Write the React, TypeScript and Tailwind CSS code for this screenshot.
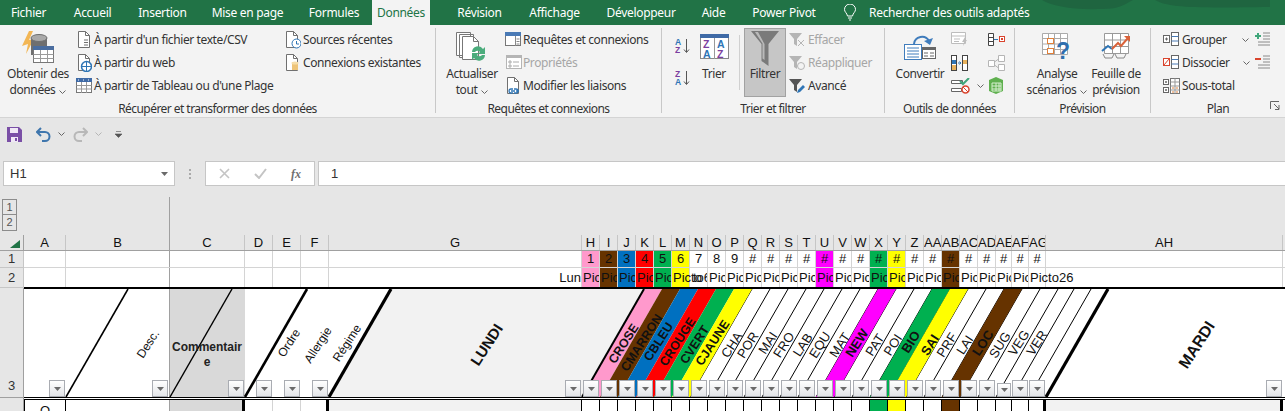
import type { ReactNode } from "react"

const uiFont = "font-['Noto_Sans',sans-serif]"
const cellFont = "font-['Liberation_Sans',Arial,sans-serif]"

const tabs = [
  { label: "Fichier", width: "w-[61px] -ml-[2px]" },
  { label: "Accueil", width: "w-[67px]" },
  { label: "Insertion", width: "w-[73px]" },
  { label: "Mise en page", width: "w-[97px]" },
  { label: "Formules", width: "w-[76px]" },
  { label: "Données", width: "w-[58px] bg-[#f3f3f3] text-[#217346] mr-[14px]" },
  { label: "Révision", width: "w-[71px]" },
  { label: "Affichage", width: "w-[79px]" },
  { label: "Développeur", width: "w-[94px]" },
  { label: "Aide", width: "w-[51px]" },
  { label: "Power Pivot", width: "w-[90px]" },
]

const Chevron = ({ grey }: { grey?: boolean }) => (
  <svg width="7" height="4" viewBox="0 0 7 4" className="inline-block shrink-0">
    <path d="M.5.5l3 3 3-3" fill="none" stroke={grey ? "#b5b5b5" : "#666"} />
  </svg>
)

const Doc = ({ children, w = 16, h = 18, stroke = "#707070" }: { children?: ReactNode; w?: number; h?: number; stroke?: string }) => (
  <svg width={w} height={h} viewBox={`0 0 ${w} ${h}`} className="shrink-0">
    <path d="M1.5.5h7l4 4v12h-11z" fill="#fff" stroke={stroke} />
    <path d="M8.5.5v4h4" fill="none" stroke={stroke} />
    {children}
  </svg>
)

const GetDataIcon = () => (
  <svg width="34" height="33" viewBox="0 0 34 33">
    <path d="M8 0L1 15l6-2-2 10 8-15-5 1 4-9z" fill="#f2b654" />
    <path d="M10 7v17h16V7z" fill="#6f6f6f" />
    <ellipse cx="18" cy="7" rx="8" ry="3.5" fill="#a9a9a9" stroke="#6f6f6f" />
    <rect x="12.5" y="15.5" width="20" height="16" fill="#fff" stroke="#777" />
    <rect x="12" y="15" width="21" height="4" fill="#4a6d9f" />
    <path d="M12.5 23.5h20M12.5 27.5h20M19.5 19v12M26.5 19v12" stroke="#9a9a9a" />
  </svg>
)

const TableIcon = () => (
  <svg width="17" height="16" viewBox="0 0 17 16" className="shrink-0">
    <rect x=".5" y=".5" width="15" height="14" fill="#fff" stroke="#777" />
    <rect x="0" y="0" width="16" height="4" fill="#3f6aa6" />
    <path d="M.5 7.5h15M.5 11h15M5.5 4v11M10.5 4v11" stroke="#9a9a9a" />
    <path d="M2 2h1M7 2h1M12 2h1" stroke="#fff" />
  </svg>
)

const RefreshIcon = () => (
  <svg width="34" height="32" viewBox="0 0 34 32">
    <path d="M1.5 1.5h14v23h-14zM4.5 3.5h14v23h-14z" fill="#fff" stroke="#777" />
    <path d="M7.5 5.5h11l5 5v18h-16z" fill="#fff" stroke="#777" />
    <path d="M18.5 5.5v5h5" fill="none" stroke="#777" />
    <path d="M17 21a6 6 0 0 1 11-3l2-2v7h-7l2-2a3 3 0 0 0-5 0z" fill="#4bac7c" />
    <path d="M30 24a6 6 0 0 1-11 3l-2 2v-7h7l-2 2a3 3 0 0 0 5 0z" fill="#4bac7c" />
  </svg>
)

const PanelIcon = () => (
  <svg width="17" height="15" viewBox="0 0 17 15" className="shrink-0">
    <rect x=".5" y=".5" width="15" height="13" fill="#fff" stroke="#777" />
    <rect x="0" y="0" width="16" height="4" fill="#4a7ab5" />
    <path d="M10.5 4v10M11.5 7h3M11.5 9.5h3M11.5 12h3" stroke="#888" />
  </svg>
)

const SortIcon = ({ top, bottom, topColor, bottomColor }: { top: string; bottom: string; topColor: string; bottomColor: string }) => (
  <svg width="16" height="16" viewBox="0 0 16 16">
    <text x="0" y="7" fontSize="8.5" fontWeight="700" fontFamily="Liberation Sans" fill={topColor}>{top}</text>
    <text x="0" y="15" fontSize="8.5" fontWeight="700" fontFamily="Liberation Sans" fill={bottomColor}>{bottom}</text>
    <path d="M11.5 1v13M9 11.5l2.5 3 2.5-3" fill="none" stroke="#555" />
  </svg>
)

const SortBigIcon = () => (
  <svg width="29" height="26" viewBox="0 0 29 26">
    <rect x=".5" y=".5" width="28" height="24" fill="#fff" stroke="#888" />
    <rect x="0" y="0" width="29" height="4" fill="#3f6aa6" />
    <path d="M14.5 4v21" stroke="#999" />
    <g fontSize="10.5" fontWeight="700" fontFamily="Liberation Sans">
      <text x="3" y="14" fill="#7b3fa0">Z</text>
      <text x="3" y="24" fill="#2f75b5">A</text>
      <text x="17" y="14" fill="#2f75b5">A</text>
      <text x="17" y="24" fill="#7b3fa0">Z</text>
    </g>
  </svg>
)

const FunnelBig = () => (
  <svg width="30" height="36" viewBox="0 0 30 36">
    <path d="M1 1h28L18.5 14v22l-7-5V14z" fill="#7a7a7a" />
    <path d="M5 2h3l6.5 12v16l-2-1.5V13.500z" fill="#b9b9b9" />
  </svg>
)

const SmallFunnel = ({ color, children }: { color: string; children?: ReactNode }) => (
  <svg width="18" height="16" viewBox="0 0 18 16" className="shrink-0">
    <path d="M0 1h13L8 7v7L5 12V7z" fill={color} />
    {children}
  </svg>
)

const ConvertIcon = () => (
  <svg width="32" height="26" viewBox="0 0 32 26">
    <path d="M10 10a8 8 0 0 1 15-3" fill="none" stroke="#3f7cbc" strokeWidth="2" />
    <path d="M20 7l6 4 3-7z" fill="#3f7cbc" />
    <rect x=".5" y="10.500" width="17" height="15" fill="#fff" stroke="#3f7cbc" />
    <path d="M3 14h12M3 17h12M3 20h12M3 23h12" stroke="#3f7cbc" />
    <rect x="18.500" y="13.500" width="13" height="11" fill="#fff" stroke="#666" />
    <rect x="18" y="13" width="14" height="3" fill="#666" />
    <path d="M20 19h4M26 19h4M20 22h4M26 22h4" stroke="#666" />
  </svg>
)

const AnalyseIcon = () => (
  <svg width="30" height="28" viewBox="0 0 30 28">
    <path d="M.5.500h25v21h-25zM.5 5.500h25M.5 11h25M.5 16.500h25M6.500.500v21M12.500.500v21M18.500.500v21" fill="#fff" stroke="#aaa" />
    <rect x="5.500" y="5.500" width="6" height="5" fill="#fff" stroke="#e0803a" />
    <rect x="5.500" y="15.500" width="6" height="5" fill="#fff" stroke="#e0803a" />
    <text x="14" y="26" fontSize="23" fontWeight="700" fontFamily="Liberation Sans" fill="#2f6fae">?</text>
  </svg>
)

const ForecastIcon = () => (
  <svg width="30" height="28" viewBox="0 0 30 28">
    <path d="M3.500.500h24v20h-24zM3.500 7h24M3.500 13.500h24M11.500.500v20M19.500.500v20" fill="#fff" stroke="#999" />
    <path d="M1 18l6-5 4 3" fill="none" stroke="#2f75b5" strokeWidth="2" />
    <path d="M11 16l6-6 3 3 7-8" fill="none" stroke="#d9623a" strokeWidth="2" />
    <path d="M23 3h6v6z" fill="#d9623a" />
    <path d="M2 21l2 4h7l2-4M14 21l2 4h7l2-4" fill="none" stroke="#888" />
  </svg>
)

const GroupIcon = ({ box }: { box: "plus" | "slash" }) => (
  <svg width="17" height="15" viewBox="0 0 17 15" className="shrink-0">
    {box === "slash" ? (
      <>
        <rect x=".5" y="3.500" width="6" height="7" fill="#fff" stroke="#d9442d" />
        <path d="M1 10l5-6" stroke="#d9442d" />
      </>
    ) : (
      <>
        <rect x=".5" y="3.500" width="6" height="7" fill="#fff" stroke="#666" />
        <path d="M2 7h3M3.500 5.500v3" stroke="#666" />
      </>
    )}
    <rect x="8.500" y=".5" width="7" height="13" fill="#fff" stroke="#666" />
    <path d="M8.500 4.500h7M8.500 9h7" stroke="#4a7ab5" />
  </svg>
)

const SubTotalIcon = () => (
  <svg width="17" height="16" viewBox="0 0 17 16" className="shrink-0">
    <rect x=".5" y="1.500" width="5" height="5" fill="#fff" stroke="#666" />
    <rect x=".5" y="9.500" width="5" height="5" fill="#fff" stroke="#666" />
    <path d="M2 4h2M3 3v2M2 12h2M3 11v2" stroke="#666" />
    <rect x="7.500" y=".5" width="9" height="15" fill="#fff" stroke="#777" />
    <path d="M7.500 4h9M7.500 8h9M7.500 12h9M12 .5v15" stroke="#999" />
    <path d="M9 10h2M13 10h2M9 14h2M13 14h2" stroke="#e0803a" />
  </svg>
)

const OutlineRight = ({ sign }: { sign: "plus" | "minus" }) => (
  <svg width="15" height="15" viewBox="0 0 15 15" className="shrink-0">
    {sign === "plus" ? <path d="M0 4h6M3 1v6" stroke="#3fa67a" strokeWidth="2" /> : <path d="M0 4h6" stroke="#d9442d" strokeWidth="2" />}
    <path d="M8 1h7M8 4h7M8 7h7M3 10h12M3 13h12" stroke="#8a8a8a" />
  </svg>
)

const SmallItem = ({ icon, label, box, disabled }: { icon: ReactNode; label: string; box: string; disabled?: boolean }) => (
  <div className={`flex h-[23px] items-center whitespace-nowrap ${disabled ? "text-[#a6a6a6]" : ""}`}>
    <div className={`flex shrink-0 items-center justify-center ${box}`}>{icon}</div>
    {label}
  </div>
)

const BigButton = ({ icon, lines, chevron, className }: { icon: ReactNode; lines: string[]; chevron?: boolean; className: string }) => (
  <div className={`flex shrink-0 flex-col items-center text-center leading-4 ${className}`}>
    <div className="flex h-[38px] items-center justify-center">{icon}</div>
    {lines.map((line, index) => (
      <div key={line} className="whitespace-nowrap">
        {line}
        {chevron && index === lines.length - 1 && (
          <span className="ml-1 inline-block align-middle">
            <Chevron />
          </span>
        )}
      </div>
    ))}
  </div>
)

const Group = ({ label, className, children }: { label: string; className: string; children: ReactNode }) => (
  <div className={`relative flex h-[85px] shrink-0 flex-col border-r border-[#c8c8c8] ${className}`}>
    <div className="flex h-[74px]">{children}</div>
    <div className="h-[11px] text-center leading-[14px] tracking-[-0.55px]">{label}</div>
  </div>
)

function Ribbon() {
  return (
    <div className={`flex h-[93px] border-b border-[#d4d4d4] bg-[#f3f3f3] pt-[3px] text-[12px] tracking-[-0.4px] text-[#333] ${uiFont}`}>
      <Group label="Récupérer et transformer des données" className="w-[436px]">
        <BigButton className="ml-[5px] w-[66px]" icon={<GetDataIcon />} lines={["Obtenir des", "données"]} chevron />
        <div className="ml-1 w-[208px]">
          <SmallItem box="w-[19px]" label="À partir d'un fichier texte/CSV" icon={<Doc w={15}><path d="M7 9h4M7 11.500h4M7 14h4" stroke="#707070" /></Doc>} />
          <SmallItem box="w-[19px]" label="À partir du web" icon={<Doc w={15}><circle cx="9.500" cy="12.500" r="5" fill="#fff" stroke="#2f75b5" strokeWidth="1.500" /><path d="M4.500 12.500h10M9.500 7.500v10" stroke="#2f75b5" /></Doc>} />
          <SmallItem box="w-[19px]" label="À partir de Tableau ou d'une Plage" icon={<TableIcon />} />
        </div>
        <div>
          <SmallItem box="w-[20px]" label="Sources récentes" icon={<Doc><circle cx="11.500" cy="12.500" r="4.500" fill="#fff" stroke="#2f75b5" /><path d="M11.500 10v3h2.500" fill="none" stroke="#2f75b5" /></Doc>} />
          <SmallItem box="w-[20px]" label="Connexions existantes" icon={<Doc><path d="M7 9h6v7H7z" fill="#eec478" /><ellipse cx="10" cy="9" rx="3.500" ry="1.500" fill="#f6dda8" /></Doc>} />
        </div>
      </Group>

      <Group label="Requêtes et connexions" className="w-[226px]">
        <BigButton className="ml-1 w-16" icon={<RefreshIcon />} lines={["Actualiser", "tout"]} chevron />
        <div>
          <SmallItem box="w-[19px]" label="Requêtes et connexions" icon={<PanelIcon />} />
          <SmallItem box="w-[19px]" disabled label="Propriétés" icon={
            <svg width="16" height="15" viewBox="0 0 16 15"><rect x=".5" y=".5" width="15" height="13" fill="#fff" stroke="#b5b5b5" /><rect width="16" height="3" fill="#b5b5b5" /><path d="M3 6h2v2H3zM3 10h2v2H3zM7 7h6M7 11h6" fill="none" stroke="#aaa" /></svg>
          } />
          <SmallItem box="w-[19px]" label="Modifier les liaisons" icon={<Doc><path d="M5 14h4M8 12h2a2 2 0 0 1 0 4H8M7 12H5a2 2 0 0 0 0 4h2M10 14h3" fill="none" stroke="#2f75b5" strokeWidth="1.300" /></Doc>} />
        </div>
      </Group>

      <Group label="Trier et filtrer" className="w-[223px]">
        <div className="ml-[13px] flex w-[19px] shrink-0 flex-col gap-[16px] pt-[10px]">
          <SortIcon top="A" bottom="Z" topColor="#2f75b5" bottomColor="#7b3fa0" />
          <SortIcon top="Z" bottom="A" topColor="#7b3fa0" bottomColor="#2f75b5" />
        </div>
        <BigButton className="w-[40px]" icon={<SortBigIcon />} lines={["Trier"]} />
        <div className="ml-[5px] mt-[7px] h-[55px] w-px bg-[#d0d0d0]" />
        <div className="ml-1 h-[69px] w-[42px] border border-[#a2a2a2] bg-[#c6c6c6] text-center leading-4">
          <div className="flex h-[37px] items-center justify-center"><FunnelBig /></div>
          Filtrer
        </div>
        <div className="ml-[2px]">
          <SmallItem box="w-[20px]" disabled label="Effacer" icon={<SmallFunnel color="#b5b5b5"><path d="M9 8l6 6M15 8l-6 6" stroke="#b5b5b5" /></SmallFunnel>} />
          <SmallItem box="w-[20px]" disabled label="Réappliquer" icon={<SmallFunnel color="#b5b5b5"><circle cx="12" cy="11" r="3.500" fill="none" stroke="#b5b5b5" /></SmallFunnel>} />
          <SmallItem box="w-[20px]" label="Avancé" icon={<SmallFunnel color="#555"><path d="M8 15l1-3 5-5 2 2-5 5z" fill="#2f75b5" /></SmallFunnel>} />
        </div>
      </Group>

      <Group label="Outils de données" className="w-[130px]">
        <BigButton className="ml-[5px] w-[60px]" icon={<ConvertIcon />} lines={["Convertir"]} />
        <div className="w-[38px] pl-px">
          <div className="flex h-[23px] items-center">
            <svg width="17" height="15" viewBox="0 0 17 15"><path d="M.5.500h14v11H.5zM.5 4h14M3 7h6M3 9.500h5" fill="#fff" stroke="#bdbdbd" /><path d="M14 5l-3 5h2l-1 4 4-6h-2l1-3z" fill="#bdbdbd" /></svg>
          </div>
          <div className="flex h-[23px] items-center">
            <svg width="17" height="16" viewBox="0 0 17 16"><rect x=".5" y=".5" width="5" height="15" fill="#fff" stroke="#444" /><rect x="11.500" y=".5" width="5" height="15" fill="#fff" stroke="#444" /><rect x="1" y="5" width="4" height="4" fill="#2f75b5" /><rect x="1" y="10" width="4" height="5" fill="#e8b25c" /><rect x="12" y="5" width="4" height="4" fill="#e8b25c" /><path d="M7 8h3M8.500 6.500l1.500 1.500-1.500 1.500" fill="none" stroke="#2f75b5" /></svg>
          </div>
          <div className="flex h-[23px] items-center gap-[6px]">
            <svg width="20" height="16" viewBox="0 0 20 16" className="shrink-0"><path d="M.5 2.500h11v3H.5zM.5 10.500h10v3H.5z" fill="#fff" stroke="#666" /><path d="M9 3l3 3 6-6" fill="none" stroke="#3fa67a" strokeWidth="2" /><circle cx="14.500" cy="11.500" r="3.500" fill="#fff" stroke="#d9442d" strokeWidth="1.500" /><path d="M12 9l5 5" stroke="#d9442d" /></svg>
            <Chevron />
          </div>
        </div>
        <div>
          <div className="flex h-[23px] items-center">
            <svg width="17" height="15" viewBox="0 0 17 15"><path d="M.5 1.500h5v12h-5zM.5 5.500h5M.5 9.500h5" fill="#fff" stroke="#444" /><path d="M6 7.500h4" stroke="#2f75b5" /><rect x="11.500" y="4.500" width="5" height="5" fill="#fff" stroke="#d9442d" /><rect x="13" y="6" width="2" height="2" fill="#d9442d" /></svg>
          </div>
          <div className="flex h-[23px] items-center">
            <svg width="17" height="16" viewBox="0 0 17 16"><path d="M.5 5.500h6v6h-6zM10.500.5h6v6h-6zM10.500 9.500h6v6h-6zM6.500 7l4-3M6.500 10l4 3" fill="#fff" stroke="#b5b5b5" /></svg>
          </div>
          <div className="flex h-[23px] items-center">
            <svg width="16" height="17" viewBox="0 0 16 17"><path d="M1 3l7-3 7 3v11l-7 3-7-3z" fill="#5fb04f" /><path d="M4 6h9v8H4zM4 9h9M4 12h9M8 6v8M11 6v8" fill="none" stroke="#d6efcf" /></svg>
          </div>
        </div>
      </Group>

      <Group label="Prévision" className="w-[136px]">
        <BigButton className="ml-[6px] w-[72px]" icon={<AnalyseIcon />} lines={["Analyse", "scénarios"]} chevron />
        <BigButton className="w-[46px]" icon={<ForecastIcon />} lines={["Feuille de", "prévision"]} />
      </Group>

      <Group label="Plan" className="w-[134px] border-r-0">
        <div className="ml-3 w-[92px]">
          <div className="flex h-[23px] items-center">
            <SmallItem box="w-[19px] justify-start" label="Grouper" icon={<GroupIcon box="plus" />} />
            <span className="ml-[16px]"><Chevron /></span>
          </div>
          <div className="flex h-[23px] items-center">
            <SmallItem box="w-[19px] justify-start" label="Dissocier" icon={<GroupIcon box="slash" />} />
            <span className="ml-[13px]"><Chevron /></span>
          </div>
          <SmallItem box="w-[19px] justify-start" label="Sous-total" icon={<SubTotalIcon />} />
        </div>
        <div>
          <div className="flex h-[23px] items-center"><OutlineRight sign="plus" /></div>
          <div className="flex h-[23px] items-center"><OutlineRight sign="minus" /></div>
        </div>
        <svg width="10" height="9" viewBox="0 0 10 9" className="absolute bottom-[3px] right-[5px]">
          <path d="M.5 8V.5H9M9 8.500H5M9 8.500V4M4 3l5 5" fill="none" stroke="#666" />
        </svg>
      </Group>
    </div>
  )
}

function Toolbar() {
  return (
    <>
      <div className="flex h-[43px] items-start bg-[#e6e6e6] pt-[9px]">
        <svg width="15" height="15" viewBox="0 0 15 15" className="ml-[7px]">
          <path d="M0 0h12l3 3v12H0z" fill="#7a4fa6" />
          <rect x="3" y="1" width="8" height="5" fill="#efe8f5" />
          <rect x="4" y="10" width="7" height="5" fill="#efe8f5" />
          <rect x="8" y="11" width="2" height="3" fill="#7a4fa6" />
        </svg>
        <svg width="15" height="15" viewBox="0 0 15 15" className="ml-[14px]">
          <path d="M1 5h8a4.500 4.500 0 0 1 0 9H6" fill="none" stroke="#3f76ad" strokeWidth="2" />
          <path d="M5 1L1 5l4 4" fill="none" stroke="#3f76ad" strokeWidth="2" />
        </svg>
        <span className="ml-[7px] mt-[5px] flex"><Chevron /></span>
        <svg width="15" height="15" viewBox="0 0 15 15" className="ml-2">
          <path d="M14 5H6a4.500 4.500 0 0 0 0 9h3" fill="none" stroke="#b8b8b8" strokeWidth="2" />
          <path d="M10 1l4 4-4 4" fill="none" stroke="#b8b8b8" strokeWidth="2" />
        </svg>
        <span className="ml-[7px] mt-[5px] flex"><Chevron grey /></span>
        <svg width="7" height="7" viewBox="0 0 7 7" className="ml-[13px] mt-[4px]">
          <path d="M1 .5h5M0 3h7l-3.500 3.500z" fill="#555" stroke="#555" strokeWidth=".6" />
        </svg>
      </div>
      <div className={`flex h-[25px] items-stretch bg-[#e6e6e6] text-[13px] text-[#333] ${cellFont}`}>
        <div className="ml-[3px] flex w-[172px] items-center justify-between border border-[#c6c6c6] bg-white pl-[6px] pr-[6px]">
          H1
          <svg width="7" height="4" viewBox="0 0 7 4"><path d="M0 0h7L3.500 4z" fill="#6a6a6a" /></svg>
        </div>
        <div className="flex w-[30px] flex-col items-center justify-center gap-[2px]">
          <span className="h-[2px] w-[2px] bg-[#aaa]" />
          <span className="h-[2px] w-[2px] bg-[#aaa]" />
          <span className="h-[2px] w-[2px] bg-[#aaa]" />
        </div>
        <div className="flex w-[110px] items-center border border-[#c6c6c6] bg-white pl-[13px]">
          <svg width="11" height="11" viewBox="0 0 11 11"><path d="M1 1l9 9M10 1l-9 9" stroke="#c4c4c4" strokeWidth="1.600" /></svg>
          <svg width="13" height="11" viewBox="0 0 13 11" className="ml-[24px]"><path d="M1 6l4 4 7-9" fill="none" stroke="#c4c4c4" strokeWidth="2" /></svg>
          <span className="ml-[24px] font-['Liberation_Serif',serif] text-[12px] font-bold italic text-[#707070]">fx</span>
        </div>
        <div className="ml-[3px] flex flex-1 items-center border border-[#c6c6c6] border-r-0 bg-white pl-3">1</div>
      </div>
      <div className="mt-[11px] flex h-[38px] bg-[#e6e6e6]">
        <div className={`flex w-[170px] flex-col border-r border-[#a0a0a0] pl-[2px] pt-[2px] text-[11px] text-[#555] ${cellFont}`}>
          <div className="flex h-4 w-[15px] items-center justify-center border border-[#8c8c8c]">1</div>
          <div className="flex h-4 w-[15px] items-center justify-center border border-t-0 border-[#8c8c8c]">2</div>
        </div>
      </div>
    </>
  )
}

const colNames = [
  "A", "B", "C", "D", "E", "F", "G", "H", "I", "J", "K", "L", "M", "N", "O", "P", "Q", "R", "S", "T", "U",
  "V", "W", "X", "Y", "Z", "AA", "AB", "AC", "AD", "AE", "AF", "AG", "AH",
]
const colWidths = [42, 104, 75, 28, 28, 28, 253, ...Array(23).fill(18), 16, 17, 17, 237]
const colLeft = (name: string) => colWidths.slice(0, colNames.indexOf(name)).reduce((a, b) => a + b, 0)

const sheetGrid =
  "grid grid-cols-[42px_104px_75px_28px_28px_28px_253px_repeat(23,18px)_16px_17px_17px_237px_2px]"

const bandClass: Record<string, string> = {
  H: "bg-[#ff99cc]",
  I: "bg-[#663300]",
  J: "bg-[#0070c0]",
  K: "bg-[#ff0000]",
  L: "bg-[#00b050]",
  M: "bg-[#ffff00]",
  U: "bg-[#ff00ff]",
  X: "bg-[#00b050]",
  Y: "bg-[#ffff00]",
  AB: "bg-[#663300]",
}
const bandFill: Record<string, string> = {
  H: "#ff99cc",
  I: "#663300",
  J: "#0070c0",
  K: "#ff0000",
  L: "#00b050",
  M: "#ffff00",
  U: "#ff00ff",
  X: "#00b050",
  Y: "#ffff00",
  AB: "#663300",
}

const row1Value = (i: number) => (i < 7 ? "" : i < 16 ? String(i - 6) : i < 33 ? "#" : "")

const labels = [
  { text: "Desc.", x: 148, y: 344, cls: "text-[12px]" },
  { text: "Ordre", x: 289, y: 343, cls: "text-[12px]" },
  { text: "Allergie", x: 318, y: 345, cls: "text-[12px]" },
  { text: "Régime", x: 347, y: 343, cls: "text-[12px]" },
  { text: "LUNDI", x: 487, y: 345, cls: "text-[15px] font-bold" },
  { text: "CROSE", x: 624, y: 344, cls: "text-[12.5px] font-bold" },
  { text: "CMARRON", x: 642, y: 343, cls: "text-[12.5px] font-bold" },
  { text: "CBLEU", x: 659, y: 342, cls: "text-[12.5px] font-bold" },
  { text: "CROUGE", x: 678, y: 342, cls: "text-[12.5px] font-bold" },
  { text: "CVERT", x: 695, y: 345, cls: "text-[12.5px] font-bold" },
  { text: "CJAUNE", x: 713, y: 343, cls: "text-[12.5px] font-bold" },
  { text: "CHA", x: 732, y: 345, cls: "text-[13px]" },
  { text: "POR", x: 748, y: 345, cls: "text-[13px]" },
  { text: "MAI", x: 768, y: 343, cls: "text-[13px]" },
  { text: "FRO", x: 784, y: 345, cls: "text-[13px]" },
  { text: "LAB", x: 803, y: 345, cls: "text-[13px]" },
  { text: "EQU", x: 820, y: 345, cls: "text-[13px]" },
  { text: "MAT", x: 840, y: 345, cls: "text-[13px]" },
  { text: "NEW", x: 857, y: 343, cls: "text-[13px] font-bold" },
  { text: "PAT", x: 875, y: 345, cls: "text-[13px]" },
  { text: "POI", x: 893, y: 345, cls: "text-[13px]" },
  { text: "BIO", x: 911, y: 342, cls: "text-[13px] font-bold" },
  { text: "SAI", x: 930, y: 345, cls: "text-[13px] font-bold" },
  { text: "PRF", x: 947, y: 345, cls: "text-[13px]" },
  { text: "LAI", x: 965, y: 345, cls: "text-[13px]" },
  { text: "LOC", x: 983, y: 343, cls: "text-[13px] font-bold" },
  { text: "SUG", x: 1000, y: 345, cls: "text-[13px]" },
  { text: "VEG", x: 1019, y: 343, cls: "text-[13px]" },
  { text: "VER", x: 1037, y: 343, cls: "text-[13px]" },
  { text: "MARDI", x: 1197, y: 345, cls: "text-[16px] font-bold" },
]

const FilterButton = ({ small }: { small?: boolean }) => (
  <div className={`relative z-10 flex items-center justify-center self-end border border-[#a9acb2] bg-gradient-to-b from-white to-[#e3e5e8] ${small ? "h-[14px] w-[14px]" : "h-[17px] w-[16px]"}`}>
    <svg width="7" height="4" viewBox="0 0 7 4"><path d="M0 0h7L3.500 4z" fill="#6a6a6a" /></svg>
  </div>
)

const SLANT = 62
const ROW_H = 108

const para = (left: number, right: number) =>
  `${left},${ROW_H} ${right},${ROW_H} ${right + SLANT},0 ${left + SLANT},0`

function HeaderSlants() {
  const thinFrom = colNames.indexOf("N")
  const thinTo = colNames.indexOf("AG")
  const line = (x: number, width: number, key: string) => (
    <line key={key} x1={x} y1={ROW_H} x2={x + SLANT} y2={0} stroke="#000" strokeWidth={width} />
  )
  return (
    <svg width="1261" height={ROW_H} viewBox={`0 0 1261 ${ROW_H}`} className="absolute inset-0">
      <polygon points={para(colLeft("G"), colLeft("H"))} fill="#f2f2f2" />
      {colNames.slice(thinFrom, thinTo + 1).map((name) => line(colLeft(name), 1, name))}
      {Object.keys(bandFill).map((name) => {
        const left = colLeft(name)
        const right = left + colWidths[colNames.indexOf(name)]
        return <polygon key={name} points={para(left, right)} fill={bandFill[name]} />
      })}
      {line(colLeft("B"), 1.6, "lb")}
      {line(colLeft("C"), 1.4, "lc")}
      {line(colLeft("D"), 2.6, "ld")}
      {line(colLeft("G"), 3.2, "lg")}
      {line(colLeft("H"), 2, "lh")}
      {line(colLeft("AH"), 3.2, "lah")}
    </svg>
  )
}

const rowFourFill = ["X", "Y", "AB"]

function rowFourStyle(name: string) {
  if (name === "A") return "border-x border-black text-center leading-[21px]"
  if (name === "B") return "border-r border-[#a0a0a0]"
  if (name === "C") return "border-r-[3px] border-black bg-[#d9d9d9]"
  if (name === "D" || name === "E") return "border-r border-[#d4d4d4]"
  if (name === "F" || name === "AG") return "border-r-[3px] border-black"
  if (name === "G") return "border-r border-black bg-[#f2f2f2]"
  if (name === "AH") return "border-r-[3px] border-black bg-[#f2f2f2]"
  return `border-r border-black ${rowFourFill.includes(name) ? bandClass[name] : ""}`
}

function Sheet() {
  return (
    <div className={`flex bg-[#e6e6e6] text-[13px] text-[#111] ${cellFont}`}>
      <div className="w-[24px] shrink-0 text-center text-[#333]">
        <div className="relative h-[16px] border-b border-r border-[#a0a0a0]">
          <svg width="10" height="8" viewBox="0 0 10 8" className="absolute bottom-[2px] right-[3px]"><path d="M0 8L10 0v8z" fill="#217346" /></svg>
        </div>
        <div className="h-[17px] border-b border-r border-[#c6c6c6] leading-[16px]">1</div>
        <div className="h-[20px] border-b border-r border-[#c6c6c6] leading-[19px]">2</div>
        <div className="flex h-[110px] items-end justify-center border-b border-r border-[#a0a0a0] pb-[2px]">3</div>
        <div className="h-[40px] border-r border-[#a0a0a0]" />
      </div>
      <div className="w-[1261px] shrink-0">
        <div className={`${sheetGrid} h-[16px] border-b border-[#a0a0a0]`}>
          {colNames.map((name) => (
            <div key={name} className={`overflow-hidden whitespace-nowrap text-center leading-[15px] ${name === "B" ? "border-r border-[#a0a0a0]" : "border-r border-[#c6c6c6]"}`}>
              {name}
            </div>
          ))}
        </div>
        <div className={`${sheetGrid} h-[17px] border-b border-[#d4d4d4] bg-white`}>
          {colNames.map((name, i) => (
            <div key={name} className={`text-center leading-[15px] ${bandClass[name] ?? ""} ${name === "B" ? "border-r border-[#a0a0a0]" : "border-r border-[#d4d4d4]"}`}>
              {row1Value(i)}
            </div>
          ))}
        </div>
        <div className={`${sheetGrid} h-[19px] bg-white`}>
          {colNames.map((name, i) => (
            <div
              key={name}
              className={`whitespace-nowrap leading-[19px] ${i === 6 ? "overflow-visible text-right" : ""} ${name === "M" || name === "AG" ? "relative z-10 overflow-visible" : "overflow-hidden"} ${name === "N" ? "pl-[3px]" : "pl-px"} ${bandClass[name] ?? ""} ${name === "B" ? "border-r border-[#a0a0a0]" : "border-r border-[#d4d4d4]"}`}
            >
              {name === "G" && "Lun"}
              {i >= 7 && i < 33 && name !== "M" && name !== "N" && name !== "AG" && "Pic"}
              {name === "M" && "Picto"}
              {name === "N" && "to6"}
              {name === "AG" && "Picto26"}
            </div>
          ))}
        </div>
        <div className="relative border-y-2 border-y-black border-b-[3px] border-b-black [border-bottom-style:double] bg-white">
          <div className={`${sheetGrid} h-[108px]`}>
            {colNames.map((name) => (
              <div
                key={name}
                className={`flex flex-col items-end justify-end pr-px ${name === "C" ? "bg-[#d9d9d9]" : ""} ${name === "B" ? "border-r border-[#a0a0a0]" : ""} ${name === "AE" ? "pr-0" : ""}`}
              >
                {name === "C" && (
                  <div className="relative z-10 mb-[10px] w-full break-all text-center text-[12px] font-bold leading-[15px] text-[#222]">
                    Commentaire
                  </div>
                )}
                <FilterButton small={name === "AE"} />
              </div>
            ))}
          </div>
          <HeaderSlants />
          {labels.map((label) => (
            <span
              key={label.text}
              className={`absolute z-[5] -translate-x-1/2 -translate-y-1/2 -rotate-[57deg] whitespace-nowrap ${label.cls}`}
              style={{ left: label.x - 24, top: label.y - 289 }}
            >
              {label.text}
            </span>
          ))}
        </div>
        <div className={`${sheetGrid} h-[20px] bg-white`}>
          {colNames.map((name) => (
            <div key={name} className={rowFourStyle(name)}>
              {name === "A" && "O"}
            </div>
          ))}
        </div>
      </div>
    </div>
  )
}

export default function App() {
  return (
    <div className="h-[411px] w-[1285px] overflow-hidden bg-[#e6e6e6]">
      <div className={`relative flex h-[25px] items-center bg-[#217346] text-[12px] tracking-[-0.3px] text-white ${uiFont}`}>
        <svg width="300" height="12" viewBox="0 0 300 12" className="absolute right-0 top-0">
          <path d="M57 0c10 6 30 10 60 9 16 0 20-3 31-9z" fill="#1f6540" />
          <path d="M170 0c14 8 40 8 115 7V0z" fill="#1f6540" />
        </svg>
        {tabs.map((tab) => (
          <div key={tab.label} className={`relative flex h-full items-center justify-center whitespace-nowrap ${tab.width}`}>
            {tab.label}
          </div>
        ))}
        <svg width="12" height="17" viewBox="0 0 12 17" className="relative ml-[15px] shrink-0">
          <path d="M3.500 12C3 9 .5 8 .5 5.500a5.500 5.500 0 0 1 11 0C11.500 8 9 9 8.500 12zM4 14h4M5 16h2" fill="none" stroke="#fff" />
        </svg>
        <span className="relative ml-[13px] whitespace-nowrap">Rechercher des outils adaptés</span>
      </div>
      <Ribbon />
      <Toolbar />
      <Sheet />
    </div>
  )
}
